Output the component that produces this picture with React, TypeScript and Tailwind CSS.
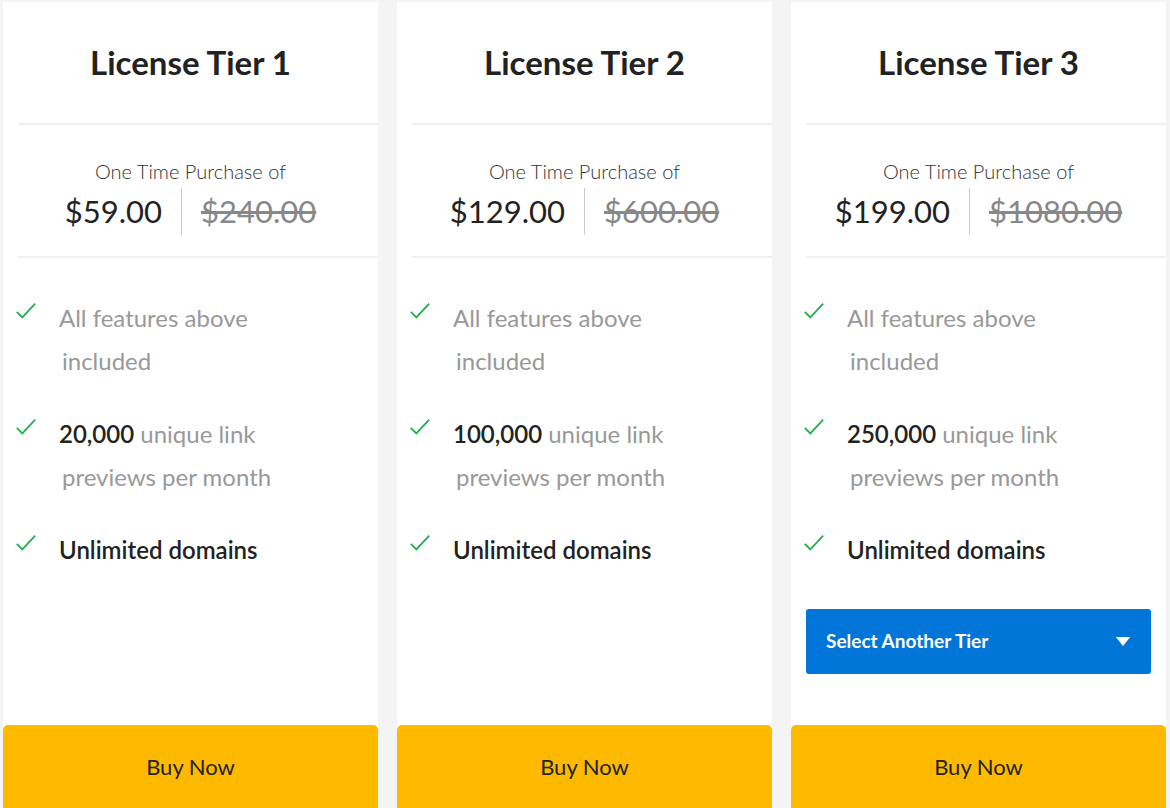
const TIERS = [
  { name: "License Tier 1", price: "$59.00", was: "$240.00", previews: "20,000" },
  { name: "License Tier 2", price: "$129.00", was: "$600.00", previews: "100,000" },
  { name: "License Tier 3", price: "$199.00", was: "$1080.00", previews: "250,000", select: true },
];

function Check() {
  return (
    <svg viewBox="0 0 24 24" className="mt-[4px] h-[22px] w-[22px] shrink-0 text-[#22b14c]" fill="none" stroke="currentColor" strokeWidth="2">
      <path d="M2 13l6 6L22 4" />
    </svg>
  );
}

function Feature({ children }: { children: React.ReactNode }) {
  return (
    <li className="flex gap-[22px] pl-[12px]">
      <Check />
      <div className="text-[24px] leading-[43px] text-[#999]">{children}</div>
    </li>
  );
}

export default function App() {
  return (
    <div className="flex h-[808px] gap-[19px] overflow-hidden bg-[#f4f4f4] pl-[3px] pt-[2px]" style={{ fontFamily: "Lato, 'Open Sans', sans-serif" }}>
      {TIERS.map((t) => (
        <div key={t.name} className="flex h-[840px] w-[375px] flex-col bg-white">
          <div className="ml-[15px] flex h-[123px] items-center justify-center border-b-2 border-[#f0f0f0] pr-[15px]">
            <h2 className="text-[33px] font-bold text-[#222]">{t.name}</h2>
          </div>
          <div className="ml-[15px] flex h-[133px] flex-col items-center justify-center border-b-2 border-[#f0f0f0] pr-[15px] pt-[10px]">
            <div className="text-[20px] font-light text-[#333]">One Time Purchase of</div>
            <div className="mt-[2px] flex items-center">
              <span className="pr-[19px] text-[31px] text-[#222]">{t.price}</span>
              <span className="border-l border-[#ccc] pl-[19px] text-[31px] text-[#888] line-through">{t.was}</span>
            </div>
          </div>
          <ul className="mt-[38px] flex flex-col gap-[30px]">
            <Feature>
              All features above
              <br />
              <span className="pl-[3px]">included</span>
            </Feature>
            <Feature>
              <b className="font-semibold text-[#222]">{t.previews}</b> unique link
              <br />
              <span className="pl-[3px]">previews per month</span>
            </Feature>
            <Feature>
              <span className="font-semibold text-[#222]">Unlimited domains</span>
            </Feature>
          </ul>
          {t.select && (
            <button className="mx-[15px] mt-[38px] flex h-[65px] items-center justify-between rounded-[3px] bg-[#0275d8] px-[20px] text-[19px] font-bold text-white">
              Select Another Tier
              <svg viewBox="0 0 16 10" className="h-[9px] w-[16px]" fill="white">
                <path d="M0 0h16L8 10z" />
              </svg>
            </button>
          )}
          <button className="mt-auto h-[117px] rounded-[5px] bg-[#ffba00] pb-[34px] text-[22px] text-[#222]">Buy Now</button>
        </div>
      ))}
    </div>
  );
}
